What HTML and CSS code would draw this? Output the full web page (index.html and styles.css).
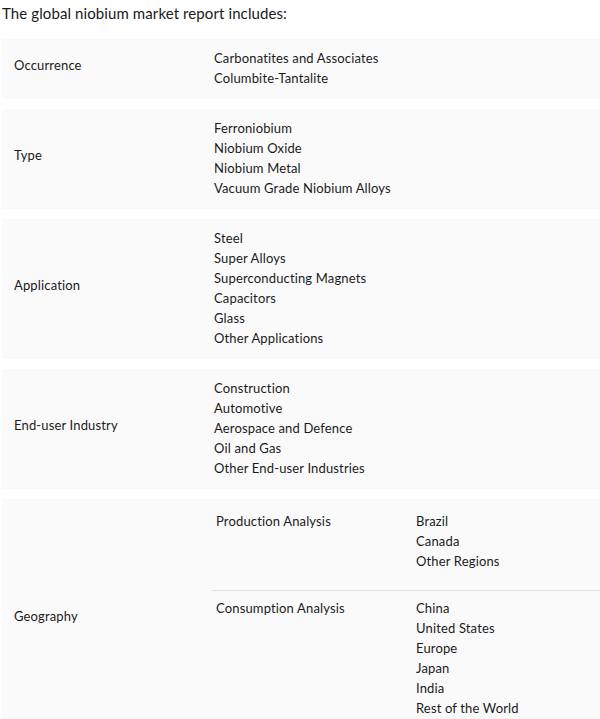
FILE: index.html
```html
<!DOCTYPE html>
<html>
<head>
<meta charset="utf-8">
<link rel="stylesheet" href="styles.css">
</head>
<body>
<div class="page">
  <p class="title">The global niobium market report includes:</p>
  <div class="rows">
    <div class="row">
      <div class="label">Occurrence</div>
      <div class="values">
        <div>Carbonatites and Associates</div>
        <div>Columbite-Tantalite</div>
      </div>
    </div>
    <div class="row">
      <div class="label">Type</div>
      <div class="values">
        <div>Ferroniobium</div>
        <div>Niobium Oxide</div>
        <div>Niobium Metal</div>
        <div>Vacuum Grade Niobium Alloys</div>
      </div>
    </div>
    <div class="row">
      <div class="label">Application</div>
      <div class="values">
        <div>Steel</div>
        <div>Super Alloys</div>
        <div>Superconducting Magnets</div>
        <div>Capacitors</div>
        <div>Glass</div>
        <div>Other Applications</div>
      </div>
    </div>
    <div class="row">
      <div class="label">End-user Industry</div>
      <div class="values">
        <div>Construction</div>
        <div>Automotive</div>
        <div>Aerospace and Defence</div>
        <div>Oil and Gas</div>
        <div>Other End-user Industries</div>
      </div>
    </div>
    <div class="row">
      <div class="label">Geography</div>
      <div class="nested">
        <div class="sub sub-first">
          <div class="sub-label">Production Analysis</div>
          <div class="sub-values">
            <div>Brazil</div>
            <div>Canada</div>
            <div>Other Regions</div>
          </div>
        </div>
        <div class="sub sub-last">
          <div class="sub-label">Consumption Analysis</div>
          <div class="sub-values">
            <div>China</div>
            <div>United States</div>
            <div>Europe</div>
            <div>Japan</div>
            <div>India</div>
            <div>Rest of the World</div>
          </div>
        </div>
      </div>
    </div>
  </div>
</div>
</body>
</html>
```
FILE: styles.css
```css
html, body {
  margin: 0;
  padding: 0;
  background: #ffffff;
}
.page {
  padding: 0 0 0 2px;
  font-family: Lato, "Liberation Sans", sans-serif;
  color: #1a1a22;
}
.title {
  margin: 0;
  padding-top: 2px;
  font-size: 15px;
  line-height: 22px;
  letter-spacing: 0.1px;
  margin-bottom: 15px;
}
.rows {
  display: flex;
  flex-direction: column;
  gap: 10px;
  font-size: 13px;
  line-height: 20px;
  letter-spacing: 0.15px;
}
.row {
  display: grid;
  grid-template-columns: 200px 1fr;
  background: #fafafa;
}
.label {
  align-self: center;
  padding: 0 12px 8px;
}
.values {
  padding: 9px 12px 11px;
}
.nested {
  padding-left: 10px;
}
.sub {
  display: grid;
  grid-template-columns: 200px 1fr;
  padding-left: 4px;
}
.sub-first {
  padding-top: 12px;
  padding-bottom: 19px;
  border-bottom: 1px solid #e2e2e2;
}
.sub-last {
  padding-top: 7px;
  padding-bottom: 23px;
}
```
